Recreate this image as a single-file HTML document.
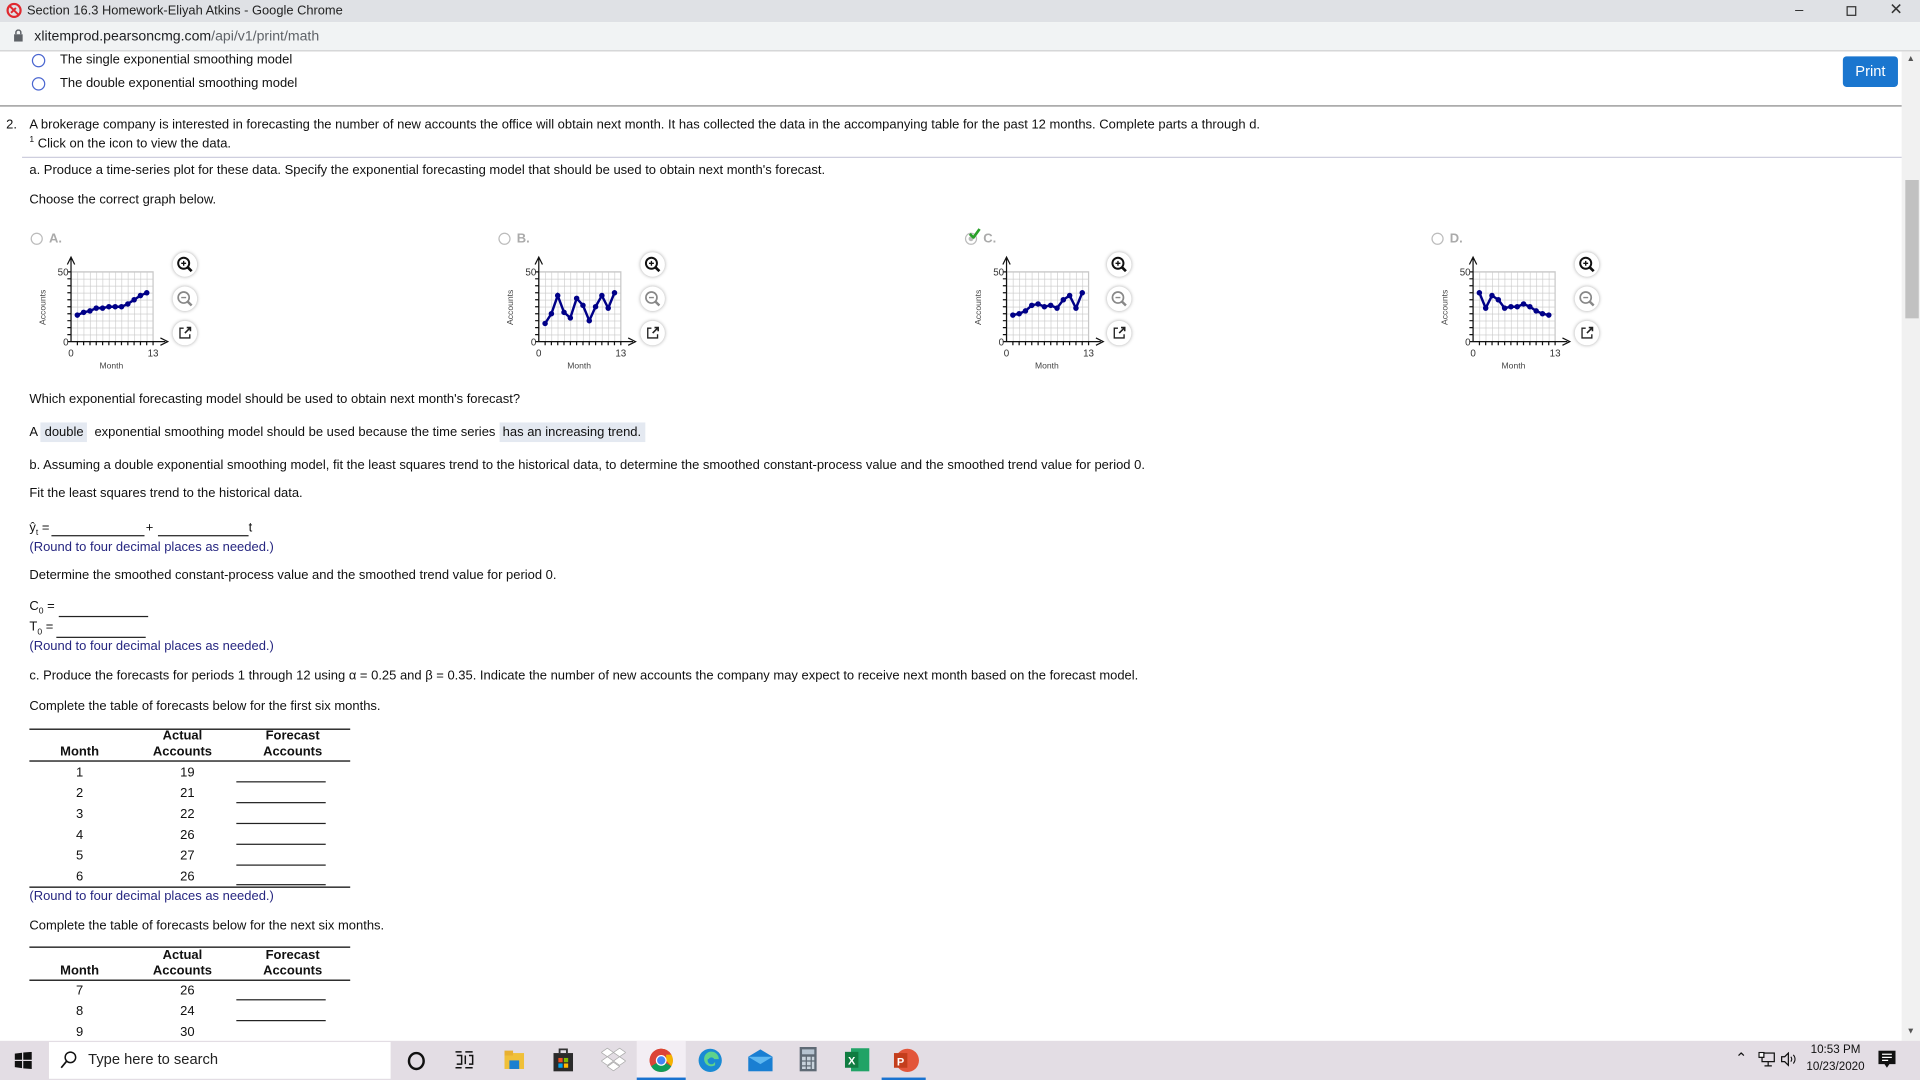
<!DOCTYPE html>
<html><head><meta charset="utf-8">
<style>
html,body{margin:0;padding:0;width:1920px;height:1080px;overflow:hidden;background:#fff}
#w{position:absolute;left:0;top:0;width:1568px;height:882px;transform:scale(1.22449);transform-origin:0 0;font-family:"Liberation Sans",Arial,sans-serif;font-size:10.6px;color:#111}
.t{position:absolute;white-space:nowrap;line-height:14px}
.nv{color:#262680}
.hl{background:#e4e9f1;padding:2px 3px}
.ln{position:absolute;height:1px;background:#000}
.bl{position:absolute;height:1px;background:#222}
.ic{position:absolute;width:20px;height:20px;border-radius:50%;background:#fff;box-shadow:0 0 3px rgba(0,0,0,.35)}
th,td{padding:0}
</style></head><body><div id="w">
<svg width="0" height="0" style="position:absolute"><defs>
<pattern id="g" patternUnits="userSpaceOnUse" x="35" y="17" width="5.154" height="5.7"><path d="M0 0H5.154M0 0V5.7" stroke="#c8c8c8" stroke-width="1" fill="none"/></pattern>
</defs></svg>

<!-- title bar -->
<div style="position:absolute;left:0;top:0;width:1568px;height:18px;background:#dfe1e5"></div>
<svg style="position:absolute;left:5px;top:2px" width="13" height="13" viewBox="0 0 13 13"><circle cx="6.5" cy="6.5" r="5.3" fill="none" stroke="#e0282e" stroke-width="1.8"/><path d="M2.8 2.8L10.2 10.2M4 8.5L8 4.5" stroke="#e0282e" stroke-width="1.6"/></svg>
<div class="t" style="left:22px;top:2px;font-size:10.5px;color:#222">Section 16.3 Homework-Eliyah Atkins - Google Chrome</div>
<div class="t" style="left:1466px;top:1px;font-size:12px;color:#333">&#8211;</div>
<div style="position:absolute;left:1508px;top:5px;width:6px;height:6px;border:1px solid #333"></div>
<div class="t" style="left:1543px;top:1px;font-size:13px;color:#333">&#10005;</div>
<!-- address bar -->
<div style="position:absolute;left:0;top:18px;width:1568px;height:23px;background:#f1f3f4;border-bottom:1px solid #d0d0d0"></div>
<svg style="position:absolute;left:11px;top:24px" width="8" height="10"><rect x="0.5" y="4" width="7" height="6" fill="#5f6368"/><path d="M2 4V2.5a2 2 0 0 1 4 0V4" stroke="#5f6368" fill="none" stroke-width="1.2"/></svg>
<div class="t" style="left:28px;top:23px;font-size:11.5px;color:#202124">xlitemprod.pearsoncmg.com<span style="color:#5f6368">/api/v1/print/math</span></div>

<!-- scrollbar -->
<div style="position:absolute;left:1553px;top:42px;width:15px;height:808px;background:#f1f1f1"></div>
<div style="position:absolute;left:1556px;top:147px;width:11px;height:113px;background:#c1c1c1"></div>
<div class="t" style="left:1557px;top:42px;font-size:7px;color:#555">&#9650;</div>
<div class="t" style="left:1557px;top:836px;font-size:7px;color:#555">&#9660;</div>

<!-- options -->
<div style="position:absolute;left:26px;top:44px;width:9px;height:9px;border:1.3px solid #4a66d0;border-radius:50%"></div>
<div class="t" style="left:49px;top:42px">The single exponential smoothing model</div>
<div style="position:absolute;left:26px;top:63px;width:9px;height:9px;border:1.3px solid #4a66d0;border-radius:50%"></div>
<div class="t" style="left:49px;top:61px">The double exponential smoothing model</div>
<div style="position:absolute;left:1505px;top:46px;width:45px;height:25px;background:#1a76cf;border-radius:3px;color:#fff;font-size:12px;line-height:25px;text-align:center">Print</div>
<div style="position:absolute;left:0;top:86px;width:1553px;height:1px;background:#888"></div>

<div class="t" style="left:5px;top:95px">2.</div>
<div class="t" style="left:24px;top:95px">A brokerage company is interested in forecasting the number of new accounts the office will obtain next month. It has collected the data in the accompanying table for the past 12 months. Complete parts a through d.</div>
<div class="t" style="left:24px;top:108px"><sup style="font-size:7px">1</sup> Click on the icon to view the data.</div>
<div style="position:absolute;left:18px;top:128px;width:1535px;height:1px;background:#ccd"></div>
<div class="t" style="left:24px;top:132px">a. Produce a time-series plot for these data. Specify the exponential forecasting model that should be used to obtain next month's forecast.</div>
<div class="t" style="left:24px;top:156px">Choose the correct graph below.</div>

<!-- chart labels -->
<div style="position:absolute;left:25px;top:190px;width:8px;height:8px;border:1px solid #bbb;border-radius:50%"></div><div class="t" style="left:40px;top:188px;color:#aaa;font-weight:bold">A.</div>
<div style="position:absolute;left:407px;top:190px;width:8px;height:8px;border:1px solid #bbb;border-radius:50%"></div><div class="t" style="left:422px;top:188px;color:#aaa;font-weight:bold">B.</div>
<div style="position:absolute;left:788px;top:190px;width:8px;height:8px;border:1px solid #bbb;border-radius:50%"><div style="margin:2px;width:4px;height:4px;border-radius:50%;background:#bbb"></div></div>
<svg style="position:absolute;left:791px;top:186px" width="10" height="9"><path d="M1 5L4 8L9 1" stroke="#2aa02a" stroke-width="2.2" fill="none"/></svg>
<div class="t" style="left:803px;top:188px;color:#aaa;font-weight:bold">C.</div>
<div style="position:absolute;left:1169px;top:190px;width:8px;height:8px;border:1px solid #bbb;border-radius:50%"></div><div class="t" style="left:1184px;top:188px;color:#aaa;font-weight:bold">D.</div>

<!-- charts -->
<svg style="position:absolute;left:23px;top:205px" width="150" height="100" font-family="Liberation Sans,Arial,sans-serif">
<rect x="35" y="17" width="67" height="57" fill="url(#g)" stroke="#c8c8c8"/>
<path d="M35 74V6M32 11L35 5L38 11M35 74H112M108 71L114 74L108 77" stroke="#111" fill="none" stroke-width="1"/>
<path d="M32 17H35M32 22.7H35M32 28.4H35M32 34.1H35M32 39.8H35M32 45.5H35M32 51.2H35M32 56.9H35M32 62.6H35M32 68.3H35M32 74H35" stroke="#111"/>
<path d="M40.2 74v3M45.3 74v3M50.5 74v3M55.6 74v3M60.8 74v3M65.9 74v3M71.1 74v3M76.2 74v3M81.4 74v3M86.5 74v3M91.7 74v3M96.8 74v3M102 74v3" stroke="#111"/>
<text x="33" y="20" font-size="8" text-anchor="end" fill="#333">50</text><text x="33" y="77" font-size="8" text-anchor="end" fill="#333">0</text>
<text x="35" y="86" font-size="8" text-anchor="middle" fill="#333">0</text><text x="102" y="86" font-size="8" text-anchor="middle" fill="#333">13</text>
<text x="68" y="96" font-size="7" text-anchor="middle" fill="#444">Month</text>
<text transform="translate(14,46) rotate(-90)" font-size="7" text-anchor="middle" fill="#444">Accounts</text>
<g transform="translate(35,74) scale(5.154,-1.14)"><polyline points="1,19 2,21 3,22 4,24 5,24 6,25 7,25 8,25 9,27 10,30 11,33 12,35" fill="none" stroke="#000088" stroke-width="2" vector-effect="non-scaling-stroke"/><path d="M1 19h0M2 21h0M3 22h0M4 24h0M5 24h0M6 25h0M7 25h0M8 25h0M9 27h0M10 30h0M11 33h0M12 35h0" stroke="#000088" stroke-width="4.5" stroke-linecap="round" vector-effect="non-scaling-stroke"/></g>
</svg>
<svg style="position:absolute;left:405px;top:205px" width="150" height="100" font-family="Liberation Sans,Arial,sans-serif">
<rect x="35" y="17" width="67" height="57" fill="url(#g)" stroke="#c8c8c8"/>
<path d="M35 74V6M32 11L35 5L38 11M35 74H112M108 71L114 74L108 77" stroke="#111" fill="none" stroke-width="1"/>
<path d="M32 17H35M32 22.7H35M32 28.4H35M32 34.1H35M32 39.8H35M32 45.5H35M32 51.2H35M32 56.9H35M32 62.6H35M32 68.3H35M32 74H35" stroke="#111"/>
<path d="M40.2 74v3M45.3 74v3M50.5 74v3M55.6 74v3M60.8 74v3M65.9 74v3M71.1 74v3M76.2 74v3M81.4 74v3M86.5 74v3M91.7 74v3M96.8 74v3M102 74v3" stroke="#111"/>
<text x="33" y="20" font-size="8" text-anchor="end" fill="#333">50</text><text x="33" y="77" font-size="8" text-anchor="end" fill="#333">0</text>
<text x="35" y="86" font-size="8" text-anchor="middle" fill="#333">0</text><text x="102" y="86" font-size="8" text-anchor="middle" fill="#333">13</text>
<text x="68" y="96" font-size="7" text-anchor="middle" fill="#444">Month</text>
<text transform="translate(14,46) rotate(-90)" font-size="7" text-anchor="middle" fill="#444">Accounts</text>
<g transform="translate(35,74) scale(5.154,-1.14)"><polyline points="1,13 2,20 3,33 4,21 5,17 6,31 7,26 8,15 9,25 10,33 11,24 12,35" fill="none" stroke="#000088" stroke-width="2" vector-effect="non-scaling-stroke"/><path d="M1 13h0M2 20h0M3 33h0M4 21h0M5 17h0M6 31h0M7 26h0M8 15h0M9 25h0M10 33h0M11 24h0M12 35h0" stroke="#000088" stroke-width="4.5" stroke-linecap="round" vector-effect="non-scaling-stroke"/></g>
</svg>
<svg style="position:absolute;left:787px;top:205px" width="150" height="100" font-family="Liberation Sans,Arial,sans-serif">
<rect x="35" y="17" width="67" height="57" fill="url(#g)" stroke="#c8c8c8"/>
<path d="M35 74V6M32 11L35 5L38 11M35 74H112M108 71L114 74L108 77" stroke="#111" fill="none" stroke-width="1"/>
<path d="M32 17H35M32 22.7H35M32 28.4H35M32 34.1H35M32 39.8H35M32 45.5H35M32 51.2H35M32 56.9H35M32 62.6H35M32 68.3H35M32 74H35" stroke="#111"/>
<path d="M40.2 74v3M45.3 74v3M50.5 74v3M55.6 74v3M60.8 74v3M65.9 74v3M71.1 74v3M76.2 74v3M81.4 74v3M86.5 74v3M91.7 74v3M96.8 74v3M102 74v3" stroke="#111"/>
<text x="33" y="20" font-size="8" text-anchor="end" fill="#333">50</text><text x="33" y="77" font-size="8" text-anchor="end" fill="#333">0</text>
<text x="35" y="86" font-size="8" text-anchor="middle" fill="#333">0</text><text x="102" y="86" font-size="8" text-anchor="middle" fill="#333">13</text>
<text x="68" y="96" font-size="7" text-anchor="middle" fill="#444">Month</text>
<text transform="translate(14,46) rotate(-90)" font-size="7" text-anchor="middle" fill="#444">Accounts</text>
<g transform="translate(35,74) scale(5.154,-1.14)"><polyline points="1,19 2,20 3,22 4,26 5,27 6,25 7,26 8,24 9,30 10,33 11,24 12,35" fill="none" stroke="#000088" stroke-width="2" vector-effect="non-scaling-stroke"/><path d="M1 19h0M2 20h0M3 22h0M4 26h0M5 27h0M6 25h0M7 26h0M8 24h0M9 30h0M10 33h0M11 24h0M12 35h0" stroke="#000088" stroke-width="4.5" stroke-linecap="round" vector-effect="non-scaling-stroke"/></g>
</svg>
<svg style="position:absolute;left:1168px;top:205px" width="150" height="100" font-family="Liberation Sans,Arial,sans-serif">
<rect x="35" y="17" width="67" height="57" fill="url(#g)" stroke="#c8c8c8"/>
<path d="M35 74V6M32 11L35 5L38 11M35 74H112M108 71L114 74L108 77" stroke="#111" fill="none" stroke-width="1"/>
<path d="M32 17H35M32 22.7H35M32 28.4H35M32 34.1H35M32 39.8H35M32 45.5H35M32 51.2H35M32 56.9H35M32 62.6H35M32 68.3H35M32 74H35" stroke="#111"/>
<path d="M40.2 74v3M45.3 74v3M50.5 74v3M55.6 74v3M60.8 74v3M65.9 74v3M71.1 74v3M76.2 74v3M81.4 74v3M86.5 74v3M91.7 74v3M96.8 74v3M102 74v3" stroke="#111"/>
<text x="33" y="20" font-size="8" text-anchor="end" fill="#333">50</text><text x="33" y="77" font-size="8" text-anchor="end" fill="#333">0</text>
<text x="35" y="86" font-size="8" text-anchor="middle" fill="#333">0</text><text x="102" y="86" font-size="8" text-anchor="middle" fill="#333">13</text>
<text x="68" y="96" font-size="7" text-anchor="middle" fill="#444">Month</text>
<text transform="translate(14,46) rotate(-90)" font-size="7" text-anchor="middle" fill="#444">Accounts</text>
<g transform="translate(35,74) scale(5.154,-1.14)"><polyline points="1,35 2,24 3,33 4,30 5,24 6,25 7,25 8,27 9,25 10,22 11,20 12,19" fill="none" stroke="#000088" stroke-width="2" vector-effect="non-scaling-stroke"/><path d="M1 35h0M2 24h0M3 33h0M4 30h0M5 24h0M6 25h0M7 25h0M8 27h0M9 25h0M10 22h0M11 20h0M12 19h0" stroke="#000088" stroke-width="4.5" stroke-linecap="round" vector-effect="non-scaling-stroke"/></g>
</svg>

<!-- chart icons -->
<div class="ic" style="left:141px;top:206px"><svg width="20" height="20"><circle cx="9" cy="9" r="4.5" fill="none" stroke="#111" stroke-width="1.6"/><path d="M12.3 12.3L15.5 15.5" stroke="#111" stroke-width="2.2"/><path d="M7 9H11M9 7V11" stroke="#111" stroke-width="1.1"/></svg></div>
<div class="ic" style="left:141px;top:234px"><svg width="20" height="20"><circle cx="9" cy="9" r="4.5" fill="none" stroke="#888" stroke-width="1.4"/><path d="M12.3 12.3L15.5 15.5" stroke="#888" stroke-width="2"/><path d="M7 9H11" stroke="#888" stroke-width="1.1"/></svg></div>
<div class="ic" style="left:141px;top:262px"><svg width="20" height="20"><path d="M9 6H6V14H14V11" fill="none" stroke="#222" stroke-width="1.1"/><path d="M10 10L14.5 5.5M11.5 5.5H14.5V8.5" fill="none" stroke="#222" stroke-width="1.3"/></svg></div>

<div class="ic" style="left:523px;top:206px"><svg width="20" height="20"><circle cx="9" cy="9" r="4.5" fill="none" stroke="#111" stroke-width="1.6"/><path d="M12.3 12.3L15.5 15.5" stroke="#111" stroke-width="2.2"/><path d="M7 9H11M9 7V11" stroke="#111" stroke-width="1.1"/></svg></div>
<div class="ic" style="left:523px;top:234px"><svg width="20" height="20"><circle cx="9" cy="9" r="4.5" fill="none" stroke="#888" stroke-width="1.4"/><path d="M12.3 12.3L15.5 15.5" stroke="#888" stroke-width="2"/><path d="M7 9H11" stroke="#888" stroke-width="1.1"/></svg></div>
<div class="ic" style="left:523px;top:262px"><svg width="20" height="20"><path d="M9 6H6V14H14V11" fill="none" stroke="#222" stroke-width="1.1"/><path d="M10 10L14.5 5.5M11.5 5.5H14.5V8.5" fill="none" stroke="#222" stroke-width="1.3"/></svg></div>

<div class="ic" style="left:904px;top:206px"><svg width="20" height="20"><circle cx="9" cy="9" r="4.5" fill="none" stroke="#111" stroke-width="1.6"/><path d="M12.3 12.3L15.5 15.5" stroke="#111" stroke-width="2.2"/><path d="M7 9H11M9 7V11" stroke="#111" stroke-width="1.1"/></svg></div>
<div class="ic" style="left:904px;top:234px"><svg width="20" height="20"><circle cx="9" cy="9" r="4.5" fill="none" stroke="#888" stroke-width="1.4"/><path d="M12.3 12.3L15.5 15.5" stroke="#888" stroke-width="2"/><path d="M7 9H11" stroke="#888" stroke-width="1.1"/></svg></div>
<div class="ic" style="left:904px;top:262px"><svg width="20" height="20"><path d="M9 6H6V14H14V11" fill="none" stroke="#222" stroke-width="1.1"/><path d="M10 10L14.5 5.5M11.5 5.5H14.5V8.5" fill="none" stroke="#222" stroke-width="1.3"/></svg></div>

<div class="ic" style="left:1286px;top:206px"><svg width="20" height="20"><circle cx="9" cy="9" r="4.5" fill="none" stroke="#111" stroke-width="1.6"/><path d="M12.3 12.3L15.5 15.5" stroke="#111" stroke-width="2.2"/><path d="M7 9H11M9 7V11" stroke="#111" stroke-width="1.1"/></svg></div>
<div class="ic" style="left:1286px;top:234px"><svg width="20" height="20"><circle cx="9" cy="9" r="4.5" fill="none" stroke="#888" stroke-width="1.4"/><path d="M12.3 12.3L15.5 15.5" stroke="#888" stroke-width="2"/><path d="M7 9H11" stroke="#888" stroke-width="1.1"/></svg></div>
<div class="ic" style="left:1286px;top:262px"><svg width="20" height="20"><path d="M9 6H6V14H14V11" fill="none" stroke="#222" stroke-width="1.1"/><path d="M10 10L14.5 5.5M11.5 5.5H14.5V8.5" fill="none" stroke="#222" stroke-width="1.3"/></svg></div>

<div class="t" style="left:24px;top:319px">Which exponential forecasting model should be used to obtain next month's forecast?</div>
<div class="t" style="left:24px;top:346px">A <span class="hl">double</span>&nbsp; exponential smoothing model should be used because the time series <span class="hl">has an increasing trend.</span></div>
<div class="t" style="left:24px;top:373px">b. Assuming a double exponential smoothing model, fit the least squares trend to the historical data, to determine the smoothed constant-process value and the smoothed trend value for period 0.</div>
<div class="t" style="left:24px;top:396px">Fit the least squares trend to the historical data.</div>
<div class="t" style="left:24px;top:424px">y&#770;<sub style="font-size:7px">t</sub> =</div>
<div class="bl" style="left:42px;top:437px;width:76px"></div>
<div class="t" style="left:119px;top:424px">+</div>
<div class="bl" style="left:129px;top:437px;width:74px"></div>
<div class="t" style="left:203px;top:424px">t</div>
<div class="t nv" style="left:24px;top:440px">(Round to four decimal places as needed.)</div>
<div class="t" style="left:24px;top:463px">Determine the smoothed constant-process value and the smoothed trend value for period 0.</div>
<div class="t" style="left:24px;top:488px">C<sub style="font-size:7px">0</sub> =</div>
<div class="bl" style="left:48px;top:503px;width:73px"></div>
<div class="t" style="left:24px;top:505px">T<sub style="font-size:7px">0</sub> =</div>
<div class="bl" style="left:46px;top:520px;width:73px"></div>
<div class="t nv" style="left:24px;top:521px">(Round to four decimal places as needed.)</div>
<div class="t" style="left:24px;top:545px">c. Produce the forecasts for periods 1 through 12 using &#945; = 0.25 and &#946; = 0.35. Indicate the number of new accounts the company may expect to receive next month based on the forecast model.</div>
<div class="t" style="left:24px;top:570px">Complete the table of forecasts below for the first six months.</div>

<!-- table 1 -->
<div class="ln" style="left:24px;top:595px;width:262px"></div>
<div class="t" style="left:24px;top:594px;width:82px;text-align:center;font-weight:bold;top:607px">Month</div>
<div class="t" style="left:106px;top:594px;width:86px;text-align:center;font-weight:bold">Actual<br><span style="position:relative;top:-1px">Accounts</span></div>
<div class="t" style="left:192px;top:594px;width:94px;text-align:center;font-weight:bold">Forecast<br><span style="position:relative;top:-1px">Accounts</span></div>
<div class="ln" style="left:24px;top:621px;width:262px"></div>
<div class="t" style="left:24px;top:623px;width:82px;text-align:center;line-height:17px">1<br>2<br>3<br>4<br>5<br>6</div>
<div class="t" style="left:106px;top:623px;width:94px;text-align:center;line-height:17px">19<br>21<br>22<br>26<br>27<br>26</div>
<div class="bl" style="left:193px;top:638px;width:73px"></div>
<div class="bl" style="left:193px;top:655px;width:73px"></div>
<div class="bl" style="left:193px;top:672px;width:73px"></div>
<div class="bl" style="left:193px;top:689px;width:73px"></div>
<div class="bl" style="left:193px;top:706px;width:73px"></div>
<div class="bl" style="left:193px;top:722px;width:73px"></div>
<div class="ln" style="left:24px;top:724px;width:262px"></div>
<div class="t nv" style="left:24px;top:725px">(Round to four decimal places as needed.)</div>
<div class="t" style="left:24px;top:749px">Complete the table of forecasts below for the next six months.</div>

<!-- table 2 -->
<div class="ln" style="left:24px;top:773px;width:262px"></div>
<div class="t" style="left:24px;top:786px;width:82px;text-align:center;font-weight:bold">Month</div>
<div class="t" style="left:106px;top:773px;width:86px;text-align:center;font-weight:bold">Actual<br><span style="position:relative;top:-1px">Accounts</span></div>
<div class="t" style="left:192px;top:773px;width:94px;text-align:center;font-weight:bold">Forecast<br><span style="position:relative;top:-1px">Accounts</span></div>
<div class="ln" style="left:24px;top:800px;width:262px"></div>
<div class="t" style="left:24px;top:801px;width:82px;text-align:center;line-height:17px">7<br>8<br>9</div>
<div class="t" style="left:106px;top:801px;width:94px;text-align:center;line-height:17px">26<br>24<br>30</div>
<div class="bl" style="left:193px;top:816px;width:73px"></div>
<div class="bl" style="left:193px;top:833px;width:73px"></div>

<!-- taskbar -->
<div style="position:absolute;left:0;top:850px;width:1568px;height:32px;background:#e3dde4"></div>
<svg style="position:absolute;left:12px;top:859px" width="14" height="14"><path d="M0 1.5L6 0.7V6.5H0ZM7 0.5L14 0V6.5H7ZM0 7.5H6V13.3L0 12.5ZM7 7.5H14V14L7 13.5Z" fill="#111"/></svg>
<div style="position:absolute;left:40px;top:851px;width:279px;height:30px;background:#fff"></div>
<svg style="position:absolute;left:49px;top:858px" width="14" height="16"><circle cx="8.5" cy="5.5" r="4.3" fill="none" stroke="#111" stroke-width="1.2"/><path d="M5.5 8.5L1 14" stroke="#111" stroke-width="1.4"/></svg>
<div class="t" style="left:72px;top:858px;font-size:12px;color:#222">Type here to search</div>
<div style="position:absolute;left:333px;top:859px;width:10px;height:11px;border:2px solid #111;border-radius:50%"></div>
<svg style="position:absolute;left:371px;top:858px" width="16" height="15"><path d="M1 1H6M1 14H6M2 4H6V11H2M9 1H15M9 4V11M12 4H15V11H12M9 14H15" stroke="#111" fill="none" stroke-width="1.2"/></svg>
<svg style="position:absolute;left:412px;top:857px" width="16" height="17"><rect x="0" y="3" width="16" height="13" fill="#f0c038"/><rect x="0" y="1" width="7" height="4" fill="#e8b030"/><rect x="4" y="9" width="8" height="7" fill="#1b7fd0"/></svg>
<svg style="position:absolute;left:452px;top:855px" width="16" height="20"><path d="M5 5V2H11V5" stroke="#333" fill="none" stroke-width="1.5"/><rect x="0" y="5" width="16" height="15" fill="#2b2b2b"/><rect x="4" y="9" width="3.5" height="3.5" fill="#f25022"/><rect x="8.5" y="9" width="3.5" height="3.5" fill="#7fba00"/><rect x="4" y="13.5" width="3.5" height="3.5" fill="#00a4ef"/><rect x="8.5" y="13.5" width="3.5" height="3.5" fill="#ffb900"/></svg>
<svg style="position:absolute;left:491px;top:855px" width="20" height="20"><path d="M5 1L10 4.5L5 8L0 4.5ZM15 1L20 4.5L15 8L10 4.5ZM5 8L10 11.5L5 15L0 11.5ZM15 8L20 11.5L15 15L10 11.5ZM10 12.5L15 16L10 19.5L5 16Z" fill="#fff" stroke="#aaa" stroke-width=".6"/></svg>
<div style="position:absolute;left:520px;top:850px;width:40px;height:32px;background:#f3eef4"></div>
<div style="position:absolute;left:520px;top:880px;width:40px;height:2px;background:#1a73d0"></div>
<svg style="position:absolute;left:530px;top:856px" width="20" height="20" viewBox="-10 -10 20 20"><circle r="9.5" fill="#db4437"/><path d="M0 0L-8.2 4.75A9.5 9.5 0 0 1 0 -9.5Z" fill="#db4437"/><path d="M-8.23 4.75A9.5 9.5 0 0 0 8.23 4.75L0 0Z" fill="#0f9d58"/><path d="M0 -9.5A9.5 9.5 0 0 1 8.23 4.75L4 0V-4.5Z" fill="#f4b400"/><path d="M-8.23 -4.75A9.5 9.5 0 0 1 8.23 -4.75L0 -4.5Z" fill="#db4437"/><circle r="4.4" fill="#fff"/><circle r="3.4" fill="#4285f4"/></svg>
<svg style="position:absolute;left:570px;top:856px" width="20" height="20" viewBox="0 0 20 20"><circle cx="10" cy="10" r="9.5" fill="#1a8ad4"/><path d="M14 14a6 6 0 1 1 3-5H8a3 3 0 0 0 6 2" fill="#5fd38c"/><circle cx="11" cy="10" r="2.5" fill="#1a8ad4"/></svg>
<svg style="position:absolute;left:611px;top:857px" width="20" height="18"><path d="M0 6L10 0L20 6V18H0Z" fill="#1a7fd2"/><path d="M0 6L10 12L20 6" fill="#5fb8f0"/></svg>
<svg style="position:absolute;left:653px;top:855px" width="14" height="20"><rect width="14" height="20" fill="#5f6a75"/><rect x="2" y="2" width="10" height="4" fill="#b6c4d1"/><path d="M2 8h3v3H2zM6 8h3v3H6zM10 8h2v3h-2zM2 12h3v3H2zM6 12h3v3H6zM10 12h2v6h-2zM2 16h3v2H2zM6 16h3v2H6z" fill="#c8d3dc"/></svg>
<svg style="position:absolute;left:690px;top:856px" width="20" height="19"><rect x="5" y="0" width="15" height="19" fill="#21a366"/><rect x="0" y="3" width="11" height="13" fill="#107c41"/><text x="2.5" y="13.5" font-size="9" font-weight="bold" fill="#fff" font-family="Liberation Sans,Arial">X</text></svg>
<div style="position:absolute;left:720px;top:880px;width:36px;height:2px;background:#1a73d0"></div>
<svg style="position:absolute;left:730px;top:856px" width="21" height="20"><circle cx="11" cy="10" r="9.5" fill="#e3563a"/><rect x="0" y="4" width="11" height="12" fill="#c43e1c"/><text x="2.5" y="14" font-size="9" font-weight="bold" fill="#fff" font-family="Liberation Sans,Arial">P</text></svg>
<div class="t" style="left:1417px;top:857px;font-size:12px;color:#111">&#8963;</div>
<svg style="position:absolute;left:1436px;top:859px" width="14" height="13"><rect x="3" y="1" width="10" height="7" fill="none" stroke="#111"/><path d="M8 8V11M5 11.5H11" stroke="#111"/><rect x="0.5" y="0.5" width="4" height="4" fill="#fff" stroke="#111"/></svg>
<svg style="position:absolute;left:1454px;top:859px" width="14" height="12"><path d="M1 4H3.5L6.5 1V11L3.5 8H1Z" fill="none" stroke="#111"/><path d="M8.5 4a3 3 0 0 1 0 4M10.5 2.5a5 5 0 0 1 0 7" fill="none" stroke="#111" stroke-width=".9"/></svg>
<div class="t" style="left:1472px;top:851px;width:54px;text-align:center;font-size:9.5px;line-height:14px;color:#111">10:53 PM<br>10/23/2020</div>
<svg style="position:absolute;left:1534px;top:858px" width="14" height="16"><path d="M0 0H14V11H9L7 14L5 11H0Z" fill="#111"/><path d="M3 3H11M3 5.5H11M3 8H8" stroke="#fff"/></svg>
</div></body></html>
